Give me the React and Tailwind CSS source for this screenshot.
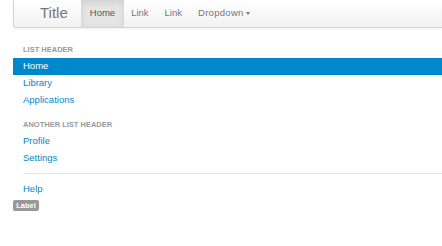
export default function App() {
  return (
    <div className="w-[442px] h-[246px] bg-white overflow-hidden" style={{ fontFamily: '"Liberation Sans", Arial, sans-serif' }}>
      <div className="ml-[13px] h-[28px] border-l border-b border-[#d4d4d4] rounded-bl-[3px] bg-gradient-to-b from-white to-[#f2f2f2] shadow-[0_1px_3px_rgba(0,0,0,0.06)] flex items-stretch">
        <div className="pl-[26px] pr-[13px] flex items-center text-[15px] text-[#777]">Title</div>
        <div className="px-[9px] flex items-center bg-[#e5e5e5] shadow-[inset_0_2px_6px_rgba(0,0,0,0.1)] text-[9.5px] text-[#555]">Home</div>
        <div className="pl-[7px] pr-[8px] flex items-center text-[9.5px] text-[#777]">Link</div>
        <div className="px-[8px] flex items-center text-[9.5px] text-[#777]">Link</div>
        <div className="px-[8px] flex items-center text-[9.5px] text-[#777] tracking-[0.3px]">
          Dropdown
          <span className="ml-[2px] inline-block w-0 h-0 border-l-[2.5px] border-r-[2.5px] border-t-[3px] border-l-transparent border-r-transparent border-t-[#777]"></span>
        </div>
      </div>
      <div className="ml-[13px] mt-[13px] flex flex-col">
        <div className="h-[17px] px-[10px] flex items-center text-[7.5px] font-bold uppercase text-[#999]">List header</div>
        <div className="h-[17px] px-[10px] flex items-center text-[9.5px] text-white bg-[#0088cc]">Home</div>
        <div className="h-[17px] px-[10px] flex items-center text-[9.5px] text-[#0088cc]">Library</div>
        <div className="h-[17px] px-[10px] flex items-center text-[9.5px] text-[#0088cc]">Applications</div>
        <div className="mt-[7px] h-[17px] px-[10px] flex items-center text-[7.5px] font-bold uppercase text-[#999]">Another list header</div>
        <div className="h-[17px] px-[10px] flex items-center text-[9.5px] text-[#0088cc]">Profile</div>
        <div className="h-[17px] px-[10px] flex items-center text-[9.5px] text-[#0088cc]">Settings</div>
        <div className="ml-[10px] mt-[6px] mb-[7px] h-px bg-[#e5e5e5]"></div>
        <div className="h-[17px] px-[10px] flex items-center text-[9.5px] text-[#0088cc]">Help</div>
      </div>
      <div className="ml-[13px] mt-[2px] w-[26px] h-[11px] rounded-[2px] bg-[#999] text-white text-[7.5px] font-bold flex items-center justify-center">Label</div>
    </div>
  );
}
